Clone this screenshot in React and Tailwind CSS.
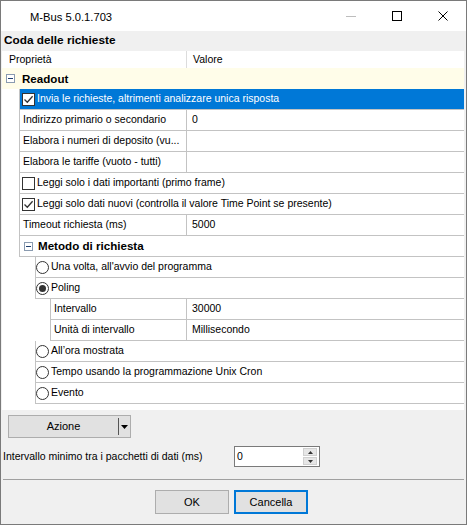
import React from "react";

const Check = ({ checked }) => (
  <span className="w-[13px] h-[13px] shrink-0 border border-[#333333] bg-white flex items-center justify-center">
    {checked && (
      <svg width="11" height="11" viewBox="0 0 11 11">
        <path d="M1.5 5.5 L4.3 8.3 L9.6 2.2" fill="none" stroke="#333333" strokeWidth="1.3" />
      </svg>
    )}
  </span>
);

const Radio = ({ on }) => (
  <span className="w-[13px] h-[13px] shrink-0 rounded-full border border-[#333333] bg-white flex items-center justify-center">
    {on && <span className="w-[7px] h-[7px] rounded-full bg-[#333333]" />}
  </span>
);

const MinusBox = () => (
  <span className="w-[9px] h-[9px] shrink-0 border border-[#8a9bb0] bg-white flex items-center justify-center">
    <span className="w-[5px] h-px bg-[#1f3f6f]" />
  </span>
);

const PropRow = ({ name, value, deep }) => (
  <div
    className={`flex h-[21px] border-b border-l border-[#c3c3c3] ${deep ? "ml-[48px]" : "ml-[17px]"}`}
  >
    <div
      className={`${deep ? "w-[136px]" : "w-[167px]"} shrink-0 flex items-center pl-[3px] border-r border-[#c3c3c3] whitespace-nowrap overflow-hidden`}
    >
      {name}
    </div>
    <div className="flex items-center pl-[5px] whitespace-nowrap">{value}</div>
  </div>
);

const CheckRow = ({ checked, text, selected }) => (
  <div
    className={`flex h-[21px] border-b border-l border-[#c3c3c3] ml-[17px] items-center pl-[2px] gap-[2px] whitespace-nowrap ${selected ? "bg-[#0078d7] text-white" : ""}`}
  >
    <Check checked={checked} />
    <span>{text}</span>
  </div>
);

const RadioRow = ({ on, text }) => (
  <div className="flex h-[21px] border-b border-l border-[#c3c3c3] ml-[33px] items-center gap-[2px] whitespace-nowrap">
    <Radio on={on} />
    <span>{text}</span>
  </div>
);

export default function App() {
  return (
    <div className="w-[467px] h-[525px] bg-[#f0f0f0] border border-[#7a7a7a] flex flex-col font-['Liberation_Sans',Arial,sans-serif] text-black overflow-hidden">
      {/* Title bar */}
      <div className="h-[30px] bg-white flex items-center shrink-0">
        <span className="pl-[29px] pt-[2px] text-[11.2px] text-black">M-Bus 5.0.1.703</span>
        <div className="ml-auto flex h-full">
          <div className="w-[46px] h-full flex items-center justify-center">
            <span className="w-[10px] h-px bg-[#bdbdbd]" />
          </div>
          <div className="w-[46px] h-full flex items-center justify-center">
            <span className="w-[10px] h-[10px] border border-black" />
          </div>
          <div className="w-[46px] h-full flex items-center justify-center">
            <svg width="10" height="10" viewBox="0 0 10 10">
              <path d="M0.5 0.5 L9.5 9.5 M9.5 0.5 L0.5 9.5" stroke="#000" strokeWidth="1" />
            </svg>
          </div>
        </div>
      </div>

      {/* Section label */}
      <div className="h-[20px] flex items-center pl-[3px] font-bold text-[11.8px] shrink-0">
        Coda delle richieste
      </div>

      {/* Property grid */}
      <div className="h-[359px] ml-px mr-[2px] bg-white text-[10.5px] shrink-0 flex flex-col">
        <div className="h-[17px] flex shrink-0">
          <div className="w-[185px] flex items-center pl-[7px] border-r border-[#dcdcdc]">Proprietà</div>
          <div className="flex items-center pl-[6px]">Valore</div>
        </div>
        <div className="h-[21px] flex items-center bg-[#fffde9] pl-[4px] gap-[7px] shrink-0">
          <MinusBox />
          <span className="font-bold text-[11.6px]">Readout</span>
        </div>
        <CheckRow selected checked text="Invia le richieste, altrimenti analizzare unica risposta" />
        <PropRow name="Indirizzo primario o secondario" value="0" />
        <PropRow name="Elabora i numeri di deposito (vu..." value="" />
        <PropRow name="Elabora le tariffe (vuoto - tutti)" value="" />
        <CheckRow checked={false} text="Leggi solo i dati importanti (primo frame)" />
        <CheckRow checked text="Leggi solo dati nuovi (controlla il valore Time Point se presente)" />
        <PropRow name="Timeout richiesta (ms)" value="5000" />
        <div className="flex h-[21px] border-b border-l border-[#c3c3c3] ml-[17px] items-center pl-[4px] gap-[5px]">
          <MinusBox />
          <span className="font-bold text-[11.6px]">Metodo di richiesta</span>
        </div>
        <RadioRow text="Una volta, all'avvio del programma" />
        <RadioRow on text="Poling" />
        <PropRow deep name="Intervallo" value="30000" />
        <PropRow deep name="Unità di intervallo" value="Millisecondo" />
        <RadioRow text="All’ora mostrata" />
        <RadioRow text="Tempo usando la programmazione Unix Cron" />
        <RadioRow text="Evento" />
      </div>

      {/* Bottom controls */}
      <div className="flex flex-col text-[10.5px]">
        <div className="mt-[5px] ml-[7px] w-[123px] h-[23px] bg-[#e1e1e1] border border-[#adadad] flex items-center">
          <span className="w-[109px] text-center text-[11px]">Azione</span>
          <span className="w-px h-[17px] bg-[#555555]" />
          <span className="flex-1 flex items-center justify-center">
            <svg width="7" height="4" viewBox="0 0 7 4">
              <path d="M0 0 L7 0 L3.5 4 Z" fill="#000" />
            </svg>
          </span>
        </div>
        <div className="mt-[8px] flex items-center h-[21px]">
          <span className="pl-[2px] w-[233px]">Intervallo minimo tra i pacchetti di dati (ms)</span>
          <div className="w-[86px] h-[21px] bg-white border border-[#7a7a7a] flex items-center">
            <span className="pl-[2px] flex-1">0</span>
            <div className="w-[14px] mr-[2px] flex flex-col gap-px">
              <div className="h-[8px] bg-[#e6e6e6] border border-[#d0d0d0] flex items-center justify-center">
                <svg width="5" height="3" viewBox="0 0 5 3">
                  <path d="M0 3 L5 3 L2.5 0 Z" fill="#333" />
                </svg>
              </div>
              <div className="h-[8px] bg-[#e6e6e6] border border-[#d0d0d0] flex items-center justify-center">
                <svg width="5" height="3" viewBox="0 0 5 3">
                  <path d="M0 0 L5 0 L2.5 3 Z" fill="#333" />
                </svg>
              </div>
            </div>
          </div>
        </div>
        <div className="mt-[12px] ml-[2px] mr-[2px] h-px bg-[#a0a0a0]" />
        <div className="mt-[10px] flex justify-center gap-[5px] pr-[4px]">
          <div className="w-[74px] h-[24px] bg-[#e1e1e1] border border-[#adadad] flex items-center justify-center text-[11px]">
            OK
          </div>
          <div className="w-[74px] h-[24px] bg-[#e1e1e1] border-2 border-[#0078d7] flex items-center justify-center text-[11px]">
            Cancella
          </div>
        </div>
      </div>
    </div>
  );
}
